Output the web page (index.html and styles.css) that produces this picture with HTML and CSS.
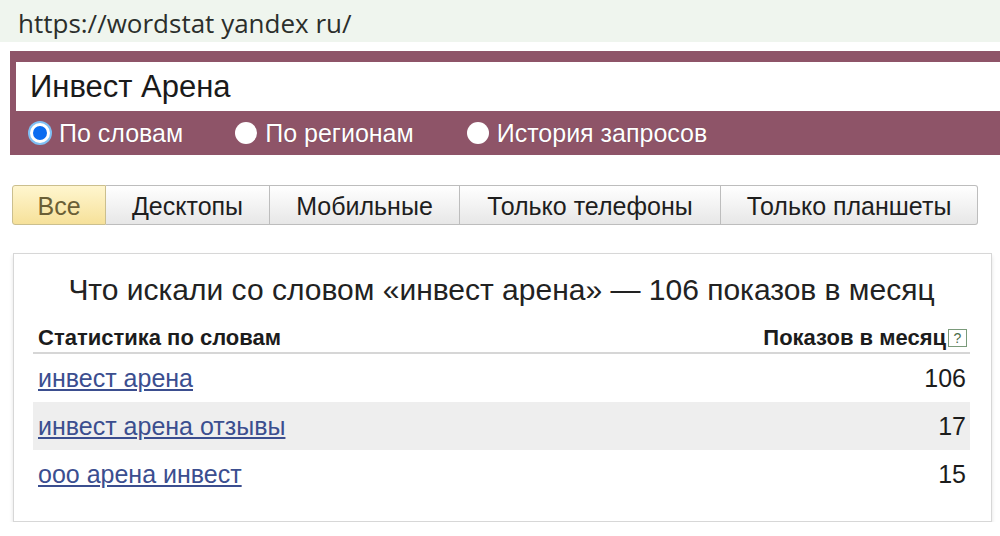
FILE: index.html
```html
<!DOCTYPE html>
<html lang="ru">
<head>
<meta charset="utf-8">
<link rel="stylesheet" href="styles.css">
</head>
<body>
<div class="urlbar">https://wordstat yandex ru/</div>
<div class="search">
  <div class="input">Инвест Арена</div>
  <div class="radios">
    <span class="radio"><span class="dot checked"></span>По словам</span>
    <span class="radio r2"><span class="dot"></span>По регионам</span>
    <span class="radio r3"><span class="dot"></span>История запросов</span>
  </div>
</div>
<div class="tabs">
  <div class="tab active t1">Все</div>
  <div class="tab t2">Десктопы</div>
  <div class="tab t3">Мобильные</div>
  <div class="tab t4">Только телефоны</div>
  <div class="tab t5">Только планшеты</div>
</div>
<div class="box">
  <div class="title">Что искали со словом «инвест арена» — 106 показов в месяц</div>
  <div class="head">
    <span>Статистика по словам</span>
    <span class="hright">Показов в месяц<span class="q">?</span></span>
  </div>
  <div class="row"><a href="#">инвест арена</a><span class="num">106</span></div>
  <div class="row odd"><a href="#">инвест арена отзывы</a><span class="num">17</span></div>
  <div class="row"><a href="#">ооо арена инвест</a><span class="num">15</span></div>
</div>
</body>
</html>
```
FILE: styles.css
```css
html, body {
  margin: 0;
  padding: 0;
  background: #ffffff;
  font-family: "Liberation Sans", Arial, sans-serif;
}

.urlbar {
  height: 42px;
  background: #eff5ee;
  padding-left: 18px;
  box-sizing: border-box;
  font-family: "Open Sans", "Noto Sans", sans-serif;
  font-size: 26px;
  line-height: 46px;
  color: #2b2e2b;
}

.search {
  margin: 9px 0 0 10px;
  background: #8e5468;
  padding: 11px 0 0 6px;
  height: 104px;
  box-sizing: border-box;
}

.input {
  height: 49px;
  background: #ffffff;
  padding-left: 14px;
  font-size: 31px;
  line-height: 49px;
  color: #1a1a1a;
}

.radios {
  display: flex;
  align-items: center;
  height: 44px;
  padding-left: 13px;
}

.radio {
  display: flex;
  align-items: center;
  color: #ffffff;
  font-size: 25px;
  text-shadow: 0 0 1px rgba(0,0,0,0.3);
}

.r2 { margin-left: 52px; }
.r3 { margin-left: 53px; }

.dot {
  width: 22px;
  height: 22px;
  border-radius: 50%;
  background: #ffffff;
  margin-right: 8px;
  box-sizing: border-box;
}

.dot.checked {
  width: 20px;
  height: 20px;
  margin: 0 9px 0 1px;
  background: #0a6cf0;
  border: 3px solid #ffffff;
  box-shadow: 0 0 0 2px #7fc0f5;
}

.tabs {
  display: flex;
  margin: 30px 0 0 12px;
  width: 966px;
  height: 40px;
}

.tab {
  height: 40px;
  box-sizing: border-box;
  border: 1px solid #bdbdbd;
  border-left: none;
  background: linear-gradient(#ffffff, #e7e7e7);
  font-size: 25px;
  line-height: 40px;
  text-align: center;
  color: #1e1e1e;
}

.tab.t1 {
  border-left: 1px solid #c9bf95;
  border-color: #cbbf8e;
  border-radius: 3px 0 0 3px;
  background: linear-gradient(#fff6cf, #f6e19a);
  color: #6a5f36;
  width: 94px;
}
.t2 { width: 164px; }
.t3 { width: 190px; }
.t4 { width: 261px; }
.t5 { width: 257px; border-radius: 0 3px 3px 0; }

.box {
  margin: 28px 0 0 13px;
  width: 979px;
  height: 269px;
  box-sizing: border-box;
  border: 1px solid #d7d7d7;
  box-shadow: 0 3px 4px rgba(0,0,0,0.12);
  padding: 0 21px 0 19px;
}

.title {
  text-align: center;
  font-size: 30px;
  color: #222222;
  height: 70px;
  line-height: 72px;
}

.head {
  display: flex;
  justify-content: space-between;
  align-items: center;
  height: 28px;
  padding: 0 3px 0 5px;
  border-bottom: 2px solid #d6d6d6;
  font-weight: bold;
  font-size: 22px;
  color: #1c1c1c;
}

.hright {
  display: flex;
  align-items: center;
}

.q {
  display: inline-block;
  width: 19px;
  height: 18px;
  box-sizing: border-box;
  border: 1px solid #7a9a7a;
  margin-left: 2px;
  font-size: 14px;
  line-height: 16px;
  text-align: center;
  font-weight: normal;
  color: #4c6e4c;
}

.row {
  display: flex;
  justify-content: space-between;
  align-items: center;
  height: 48px;
  padding: 0 4px 0 5px;
  font-size: 25px;
}

.row:first-of-type { margin-top: 1px; }

.row.odd {
  background: #eeeeee;
}

.row a {
  color: #3b4e8f;
  text-decoration: underline;
  text-underline-offset: 2px;
}

.num {
  color: #1c1c1c;
}
```
